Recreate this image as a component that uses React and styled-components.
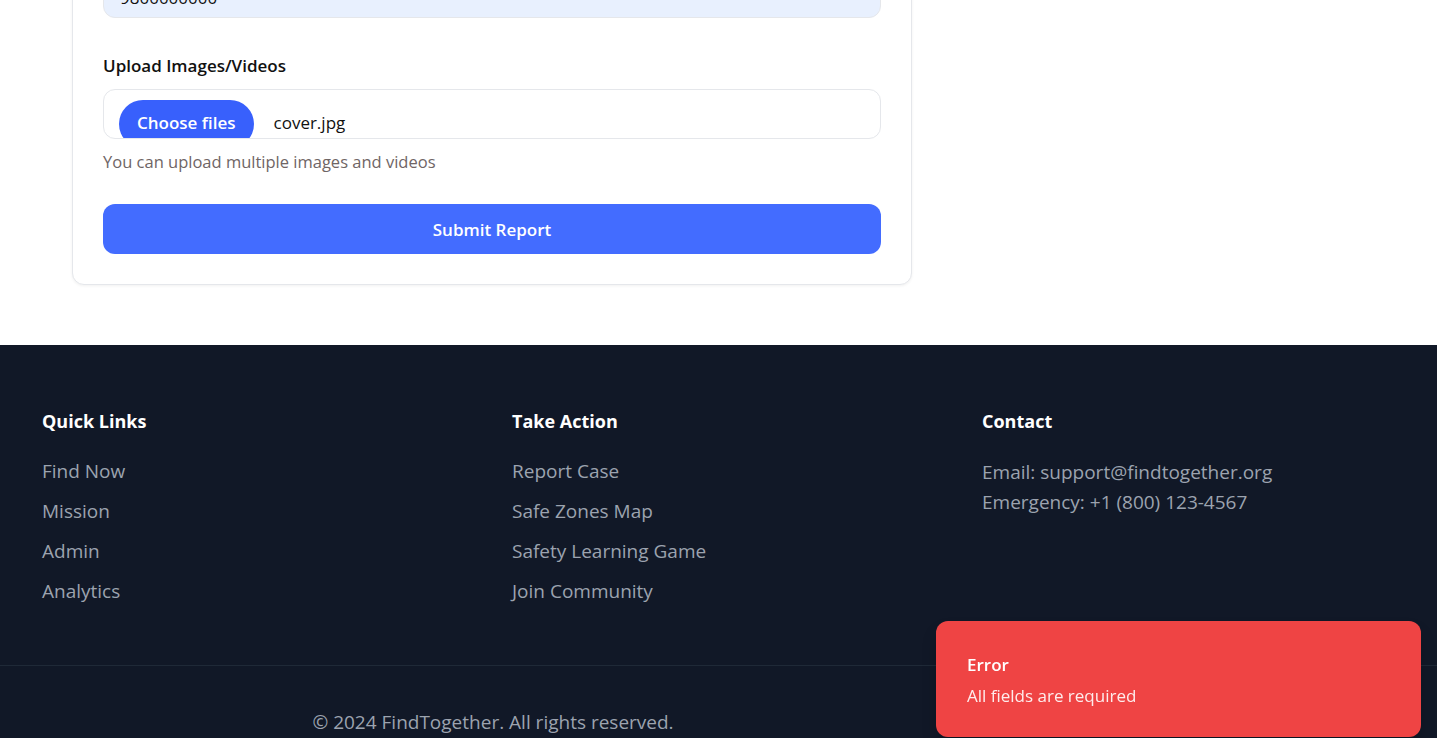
import React from 'react';
import styled, { createGlobalStyle } from 'styled-components';

const GlobalStyle = createGlobalStyle`
  * { box-sizing: border-box; }
  html, body {
    margin: 0;
    padding: 0;
    background: #ffffff;
    font-family: "Open Sans", "Noto Sans", sans-serif;
    overflow: hidden;
  }
`;

const quickLinks = ['Find Now', 'Mission', 'Admin', 'Analytics'];
const actionLinks = ['Report Case', 'Safe Zones Map', 'Safety Learning Game', 'Join Community'];

function App() {
    return (
        <Page>
            <GlobalStyle />
            <Main>
                <Card>
                    <Field>
                        <Label>Phone Number</Label>
                        <TextInput defaultValue="9800000000" />
                    </Field>
                    <Field>
                        <Label>Upload Images/Videos</Label>
                        <FileBox>
                            <ChooseButton type="button">Choose files</ChooseButton>
                            <FileName>cover.jpg</FileName>
                        </FileBox>
                        <Hint>You can upload multiple images and videos</Hint>
                    </Field>
                    <SubmitButton type="button">Submit Report</SubmitButton>
                </Card>
            </Main>

            <Footer>
                <Columns>
                    <Column>
                        <ColumnTitle>Quick Links</ColumnTitle>
                        <LinkList>
                            {quickLinks.map((l) => (
                                <FooterLink key={l}>{l}</FooterLink>
                            ))}
                        </LinkList>
                    </Column>
                    <Column>
                        <ColumnTitle>Take Action</ColumnTitle>
                        <LinkList>
                            {actionLinks.map((l) => (
                                <FooterLink key={l}>{l}</FooterLink>
                            ))}
                        </LinkList>
                    </Column>
                    <Column>
                        <ColumnTitle>Contact</ColumnTitle>
                        <ContactList>
                            <ContactLine>Email: support@findtogether.org</ContactLine>
                            <ContactLine>Emergency: +1 (800) 123-4567</ContactLine>
                        </ContactList>
                    </Column>
                </Columns>
                <BottomBar>
                    <Copyright>© 2024 FindTogether. All rights reserved.</Copyright>
                </BottomBar>
            </Footer>

            <Toast>
                <ToastTitle>Error</ToastTitle>
                <ToastText>All fields are required</ToastText>
            </Toast>
        </Page>
    );
}

export default App;

const Page = styled.div`
    min-height: 738px;
`;

// page is shown scrolled down: the card starts above the viewport
const Main = styled.main`
    padding: 0 72px 60px;
    margin-top: -97px;
`;

const Card = styled.div`
    width: 840px;
    background: #fff;
    border: 1px solid #e5e7eb;
    border-radius: 12px;
    box-shadow: 0 1px 3px rgba(0, 0, 0, 0.06);
    padding: 29px 30px 30px;
    display: flex;
    flex-direction: column;
`;

const Field = styled.div`
    display: flex;
    flex-direction: column;
    margin-bottom: 30px;

    & + & {
        margin-top: 6px;
    }
`;

const Label = styled.label`
    font-size: 17px;
    font-weight: 600;
    line-height: 24px;
    color: #111111;
    margin-bottom: 11px;
`;

const TextInput = styled.input`
    height: 50px;
    padding: 9px 16px 0;
    border: 1px solid #e5e7eb;
    border-radius: 12px;
    background: #e8f0fe;
    font-family: inherit;
    font-size: 17px;
    color: #111;
    outline: none;
`;

const FileBox = styled.div`
    height: 50px;
    border: 1px solid #e5e7eb;
    border-radius: 12px;
    padding: 10px 0 0 15px;
    display: flex;
    align-items: flex-start;
    gap: 20px;
    overflow: hidden;
`;

const ChooseButton = styled.button`
    flex: none;
    height: 48px;
    padding: 0 18px;
    border: none;
    border-radius: 24px;
    background: #3860fc;
    color: #fff;
    font-family: inherit;
    font-size: 17px;
    font-weight: 600;
    line-height: 46px;
    display: flex;
    align-items: flex-start;
`;

const FileName = styled.span`
    font-size: 17px;
    line-height: 46px;
    color: #111;
`;

const Hint = styled.p`
    margin: 11px 0 0;
    font-size: 16.5px;
    line-height: 24px;
    color: #6f6565;
`;

const SubmitButton = styled.button`
    height: 50px;
    border: none;
    border-radius: 12px;
    background: #436cff;
    color: #fff;
    font-family: inherit;
    font-size: 17px;
    font-weight: 600;
`;

const Footer = styled.footer`
    background: #111827;
    padding-top: 60px;
`;

const Columns = styled.div`
    display: grid;
    grid-template-columns: repeat(3, 1fr);
    column-gap: 57px;
    padding: 0 42px 60px;
`;

const Column = styled.div`
    display: flex;
    flex-direction: column;
`;

const ColumnTitle = styled.h3`
    margin: 0 0 20px;
    font-size: 18px;
    font-weight: 700;
    line-height: 32px;
    color: #ffffff;
`;

const LinkList = styled.ul`
    list-style: none;
    margin: 0;
    padding: 0;
    display: flex;
    flex-direction: column;
    gap: 12px;
`;

const FooterLink = styled.li`
    font-size: 19px;
    line-height: 28px;
    color: #9ca3af;
`;

const ContactList = styled.div`
    display: flex;
    flex-direction: column;
`;

const ContactLine = styled.p`
    margin: 0;
    font-size: 19px;
    line-height: 30px;
    color: #9ca3af;
`;

const BottomBar = styled.div`
    border-top: 1px solid #1f2937;
    display: grid;
    grid-template-columns: 2fr 1fr;
    padding: 41px 42px 0;
    height: 100px;
`;

const Copyright = styled.p`
    margin: 0;
    text-align: center;
    font-size: 19px;
    line-height: 30px;
    color: #9ca3af;
`;

const Toast = styled.div`
    position: fixed;
    right: 16px;
    bottom: 1px;
    width: 485px;
    height: 116px;
    background: #ef4444;
    border-radius: 12px;
    padding: 32px 31px;
    display: flex;
    flex-direction: column;
    gap: 7px;
    box-shadow: 0 10px 15px rgba(0, 0, 0, 0.15);
`;

const ToastTitle = styled.div`
    font-size: 17px;
    font-weight: 600;
    line-height: 24px;
    color: #ffffff;
`;

const ToastText = styled.div`
    font-size: 17px;
    line-height: 24px;
    color: rgba(255, 255, 255, 0.9);
`;
